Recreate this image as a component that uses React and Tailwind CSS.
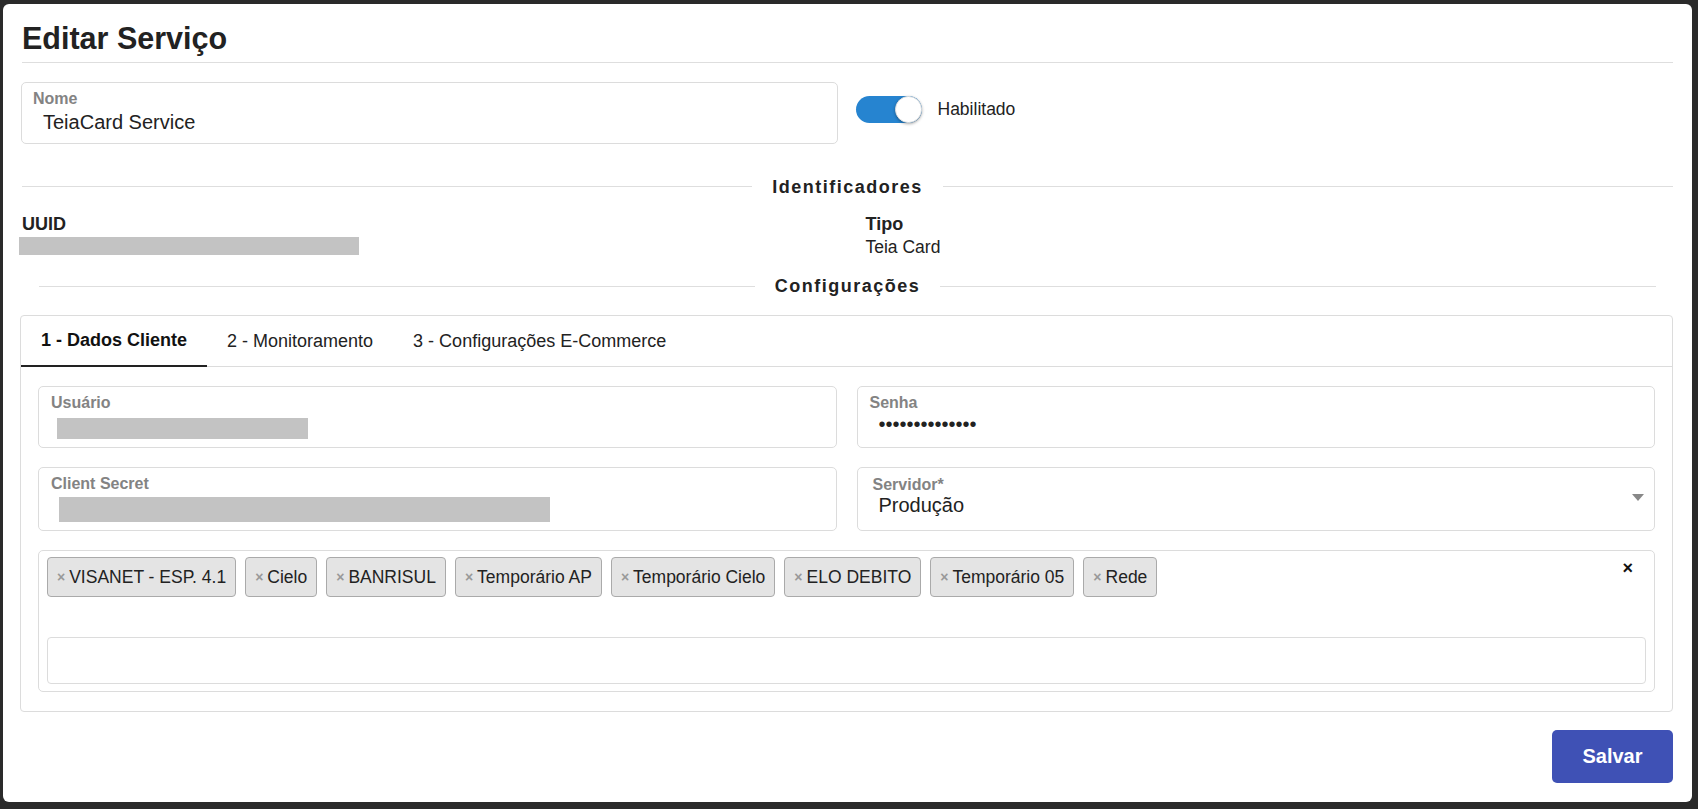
import React from "react";

const TAGS = [
  "VISANET - ESP. 4.1",
  "Cielo",
  "BANRISUL",
  "Temporário AP",
  "Temporário Cielo",
  "ELO DEBITO",
  "Temporário 05",
  "Rede",
];

function SectionTitle({ label, className = "" }) {
  return (
    <div className={`flex items-center gap-[20px] ${className}`}>
      <div className="flex-1 h-px bg-[#dedede]" />
      <span className="text-[18px] leading-[20.7px] font-bold tracking-[1.5px] text-[#222]">{label}</span>
      <div className="flex-1 h-px bg-[#dedede]" />
    </div>
  );
}

function FieldBox({ label, children, className = "" }) {
  return (
    <div className={`border border-[#dcdcdc] rounded-[5px] pl-[12px] pt-[7px] ${className}`}>
      <div className="text-[16px] leading-[18.4px] font-bold text-[#838383]">{label}</div>
      {children}
    </div>
  );
}

export default function App() {
  return (
    <div className="w-full h-[809px] bg-[#2a2a2a] pt-[4px] pl-[3px] font-['Liberation_Sans',Arial,sans-serif] text-[#222]">
      <div className="w-[1689px] h-[798px] bg-white rounded-[6px] px-[19px]">
        {/* header */}
        <h1 className="text-[30.5px] leading-[34.5px] font-bold pt-[17px] pb-[6px] border-b border-[#dedede] text-[#222]">
          Editar Serviço
        </h1>

        {/* nome + habilitado */}
        <div className="grid grid-cols-2 gap-x-5 mt-[19px]">
          <div className="-ml-px h-[62px] border border-[#dcdcdc] rounded-[5px] pl-[11px] pt-[7px]">
            <div className="text-[16px] leading-[18.4px] font-bold text-[#838383]">Nome</div>
            <div className="text-[20px] leading-[23px] mt-[3px] pl-[10px] text-[#222]">TeiaCard Service</div>
          </div>
          <div className="-ml-[2px] flex items-start pt-[14px]">
            <div className="relative w-[66px] h-[27px] rounded-full bg-[#2684d0]">
              <div className="absolute right-0 top-0 w-[27px] h-[27px] rounded-full bg-white border border-[#e2e2e2] shadow-[0_1px_3px_rgba(0,0,0,0.35)]" />
            </div>
            <span className="ml-[16px] text-[17.5px] leading-[27px] text-[#222]">Habilitado</span>
          </div>
        </div>

        {/* identificadores */}
        <SectionTitle label="Identificadores" className="mt-[33px]" />
        <div className="grid grid-cols-2 gap-x-5 mt-[17px]">
          <div>
            <div className="text-[18px] leading-[20.7px] font-bold">UUID</div>
            <div className="-ml-[3px] mt-[2px] w-[340px] h-[18px] bg-[#c3c3c3]" />
          </div>
          <div className="pl-[8px]">
            <div className="text-[18px] leading-[20.7px] font-bold">Tipo</div>
            <div className="text-[17.5px] leading-[20.1px] mt-[2px]">Teia Card</div>
          </div>
        </div>

        {/* configurações */}
        <SectionTitle label="Configurações" className="mt-[19px] mx-[17px]" />
        <div className="-ml-[2px] mt-[18px] border border-[#dcdcdc] rounded-[4px]">
          <div className="flex border-b border-[#dcdcdc] text-[18px]">
            <div className="h-[51px] -mb-px px-[20px] flex items-center font-bold text-[#111] border-b-2 border-[#222]">
              1 - Dados Cliente
            </div>
            <div className="h-[51px] -mb-px px-[20px] flex items-center text-[#222]">2 - Monitoramento</div>
            <div className="h-[51px] -mb-px px-[20px] flex items-center text-[#222]">3 - Configurações E-Commerce</div>
          </div>

          <div className="pl-[17px] pr-[17px] pt-[19px] pb-[19px]">
            <div className="grid grid-cols-2 gap-x-5 gap-y-[19px]">
              <FieldBox label="Usuário" className="h-[62px]">
                <div className="ml-[6px] mt-[6px] w-[251px] h-[21px] bg-[#c3c3c3]" />
              </FieldBox>
              <FieldBox label="Senha" className="h-[62px]">
                <div className="pl-[9px] mt-[1px] text-[20px] leading-[23px] text-[#222]">••••••••••••••</div>
              </FieldBox>
              <FieldBox label="Client Secret" className="h-[64px]">
                <div className="ml-[8px] mt-[4px] w-[491px] h-[25px] bg-[#c3c3c3]" />
              </FieldBox>
              <div className="h-[64px] border border-[#dcdcdc] rounded-[5px] flex items-center pr-[10px]">
                <div className="flex-1 pl-[15px] self-start pt-[8px]">
                  <div className="text-[16px] leading-[18.4px] font-bold text-[#838383]">Servidor*</div>
                  <div className="pl-[6px] text-[20px] leading-[23px] text-[#222]">Produção</div>
                </div>
                <svg width="12" height="7" viewBox="0 0 12 7" className="-mt-[3px]">
                  <path d="M0 0H12L6 7Z" fill="#888" />
                </svg>
              </div>

              <div className="col-span-2 relative h-[142px] border border-[#dcdcdc] rounded-[5px] px-[8px] pt-[6px] pb-[7px]">
                <div className="flex flex-wrap gap-[9px]">
                  {TAGS.map((t) => (
                    <div
                      key={t}
                      className="h-[40px] flex items-center gap-[4px] pl-[9px] pr-[9px] border border-[#aaa] rounded-[4px] bg-[#e4e4e4] text-[17.5px] text-[#222]"
                    >
                      <span className="text-[14px] font-bold text-[#999] leading-none">×</span>
                      <span>{t}</span>
                    </div>
                  ))}
                </div>
                <span className="absolute right-[21px] top-[7px] text-[18px] font-bold leading-[20px] text-[#111]">×</span>
                <div className="mt-[40px] h-[47px] border border-[#dcdcdc] rounded-[4px]" />
              </div>
            </div>
          </div>
        </div>

        <div className="flex justify-end mt-[18px]">
          <button className="w-[121px] h-[53px] rounded-[5px] bg-[#3f51b5] text-white text-[20px] font-bold">
            Salvar
          </button>
        </div>
      </div>
    </div>
  );
}
